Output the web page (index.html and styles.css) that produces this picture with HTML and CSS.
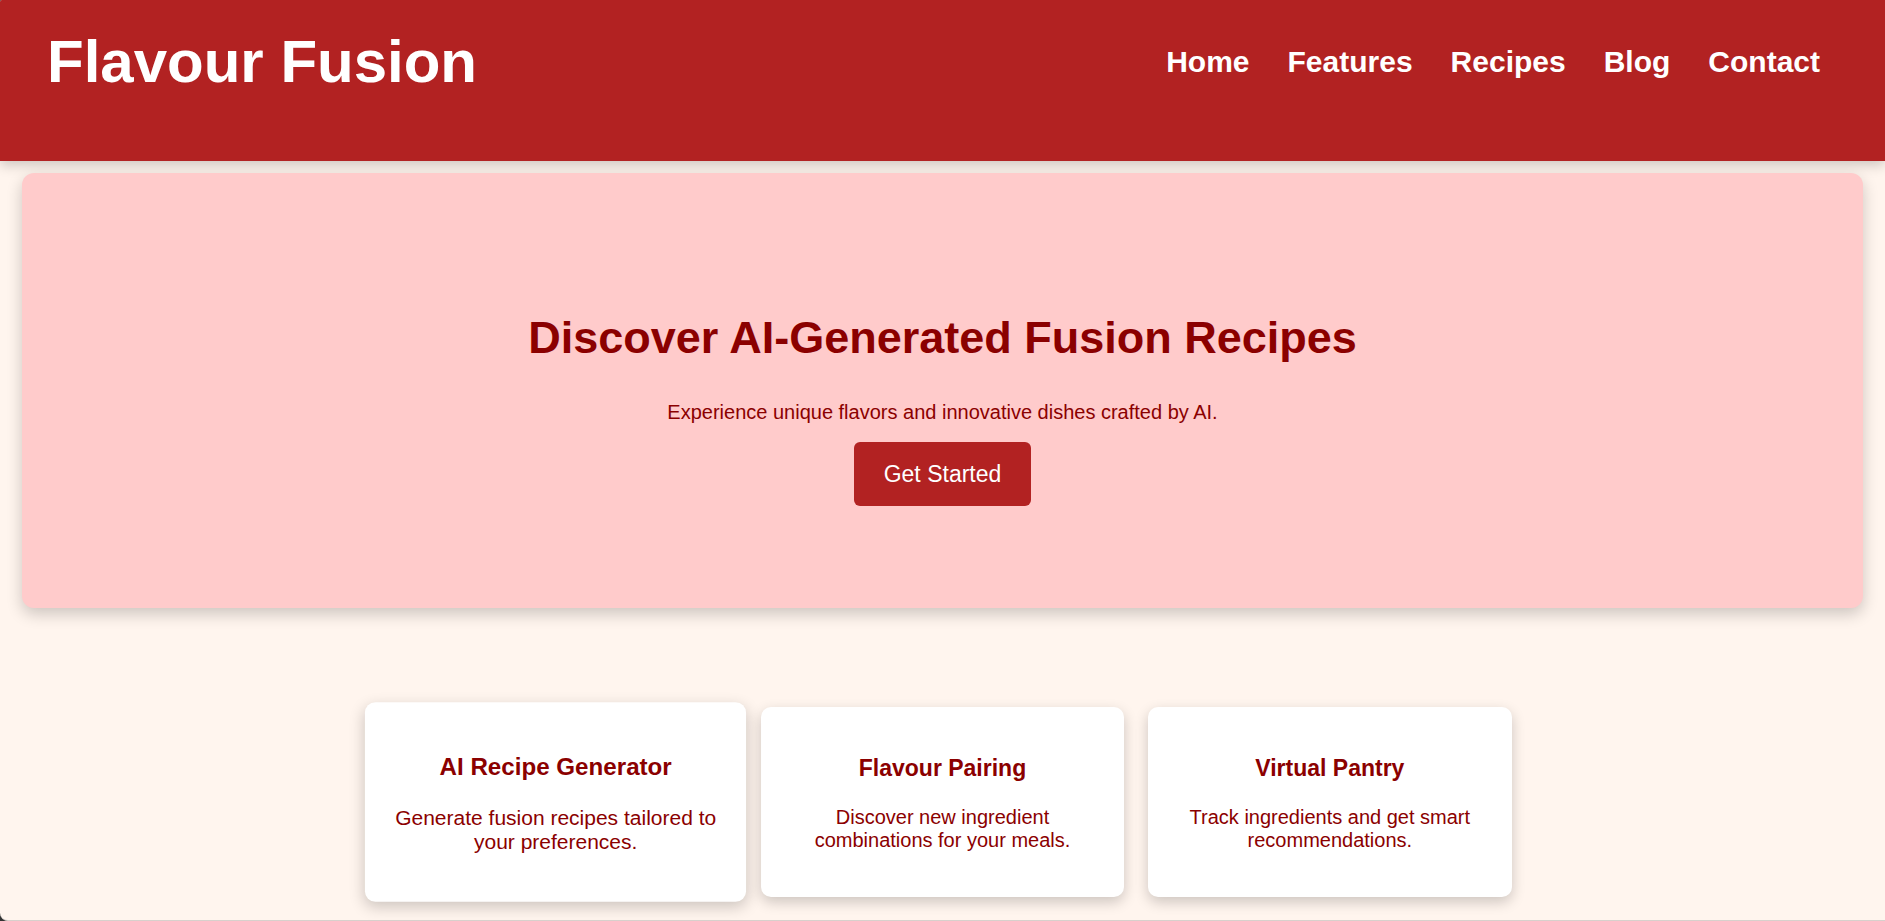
FILE: index.html
```html
<!DOCTYPE html>
<html lang="en">
<head>
  <meta charset="utf-8">
  <meta name="viewport" content="width=device-width, initial-scale=1">
  <title>Flavour Fusion</title>
  <link rel="stylesheet" href="styles.css">
</head>
<body>
  <header class="site-header">
    <h1 class="brand">Flavour Fusion</h1>
    <nav class="site-nav">
      <a href="#home">Home</a>
      <a href="#features">Features</a>
      <a href="#recipes">Recipes</a>
      <a href="#blog">Blog</a>
      <a href="#contact">Contact</a>
    </nav>
  </header>
  <main>
    <section class="hero" id="home">
      <h2 class="hero-title">Discover AI-Generated Fusion Recipes</h2>
      <p class="hero-text">Experience unique flavors and innovative dishes crafted by AI.</p>
      <button class="hero-button" type="button">Get Started</button>
    </section>
    <section class="features" id="features">
      <article class="card card-active">
        <h3 class="card-title">AI Recipe Generator</h3>
        <p class="card-text">Generate fusion recipes tailored to your preferences.</p>
      </article>
      <article class="card">
        <h3 class="card-title">Flavour Pairing</h3>
        <p class="card-text">Discover new ingredient combinations for your meals.</p>
      </article>
      <article class="card">
        <h3 class="card-title">Virtual Pantry</h3>
        <p class="card-text">Track ingredients and get smart recommendations.</p>
      </article>
    </section>
  </main>
</body>
</html>
```
FILE: styles.css
```css
* {
  box-sizing: border-box;
}

html {
  background: #333333;
}

body {
  margin: 0;
  min-height: 100vh;
  border-bottom: 1px solid #d8d0cc;
  border-radius: 2px 0 0 8px;
  overflow: hidden;
  background: #fff5ee;
  color: #8b0000;
  font-family: "Liberation Sans", Arial, sans-serif;
}

.site-header {
  display: flex;
  justify-content: space-between;
  align-items: center;
  padding: 27px 65px 65px 47px;
  background: #b22222;
  box-shadow: 0 4px 12px rgba(0, 0, 0, 0.2);
}

.brand {
  margin: 0;
  color: #ffffff;
  font-size: 60px;
  line-height: 69px;
}

.site-nav {
  display: flex;
  flex-wrap: wrap;
  gap: 38px;
}

.site-nav a {
  color: #ffffff;
  font-size: 30px;
  font-weight: bold;
  text-decoration: none;
}

.hero {
  display: flex;
  flex-direction: column;
  align-items: center;
  margin: 12px 22px 0;
  padding: 139px 20px 102px;
  border-radius: 12px;
  background: #ffcbcb;
  box-shadow: 0 6px 16px rgba(0, 0, 0, 0.2);
  text-align: center;
}

.hero-title {
  margin: 0;
  font-size: 45px;
  line-height: 52px;
}

.hero-text {
  margin: 37px 0 18px;
  font-size: 20px;
  line-height: 23px;
}

.hero-button {
  padding: 18px 30px;
  border: 0;
  border-radius: 6px;
  background: #b22222;
  color: #ffffff;
  font-family: inherit;
  font-size: 23px;
  line-height: 28px;
}

.features {
  display: grid;
  grid-template-columns: repeat(3, 1fr);
  gap: 24px;
  max-width: 1138px;
  margin: 99px auto 23px;
}

.card {
  padding: 48px 24px 45px;
  border-radius: 10px;
  background: #ffffff;
  box-shadow: 0 5px 14px rgba(0, 0, 0, 0.2);
  text-align: center;
}

.card-active {
  transform: scale(1.05);
}

.card-title {
  margin: 0 0 25px;
  font-size: 23px;
  line-height: 26px;
}

.card-text {
  margin: 0;
  font-size: 20px;
  line-height: 23px;
}
```
